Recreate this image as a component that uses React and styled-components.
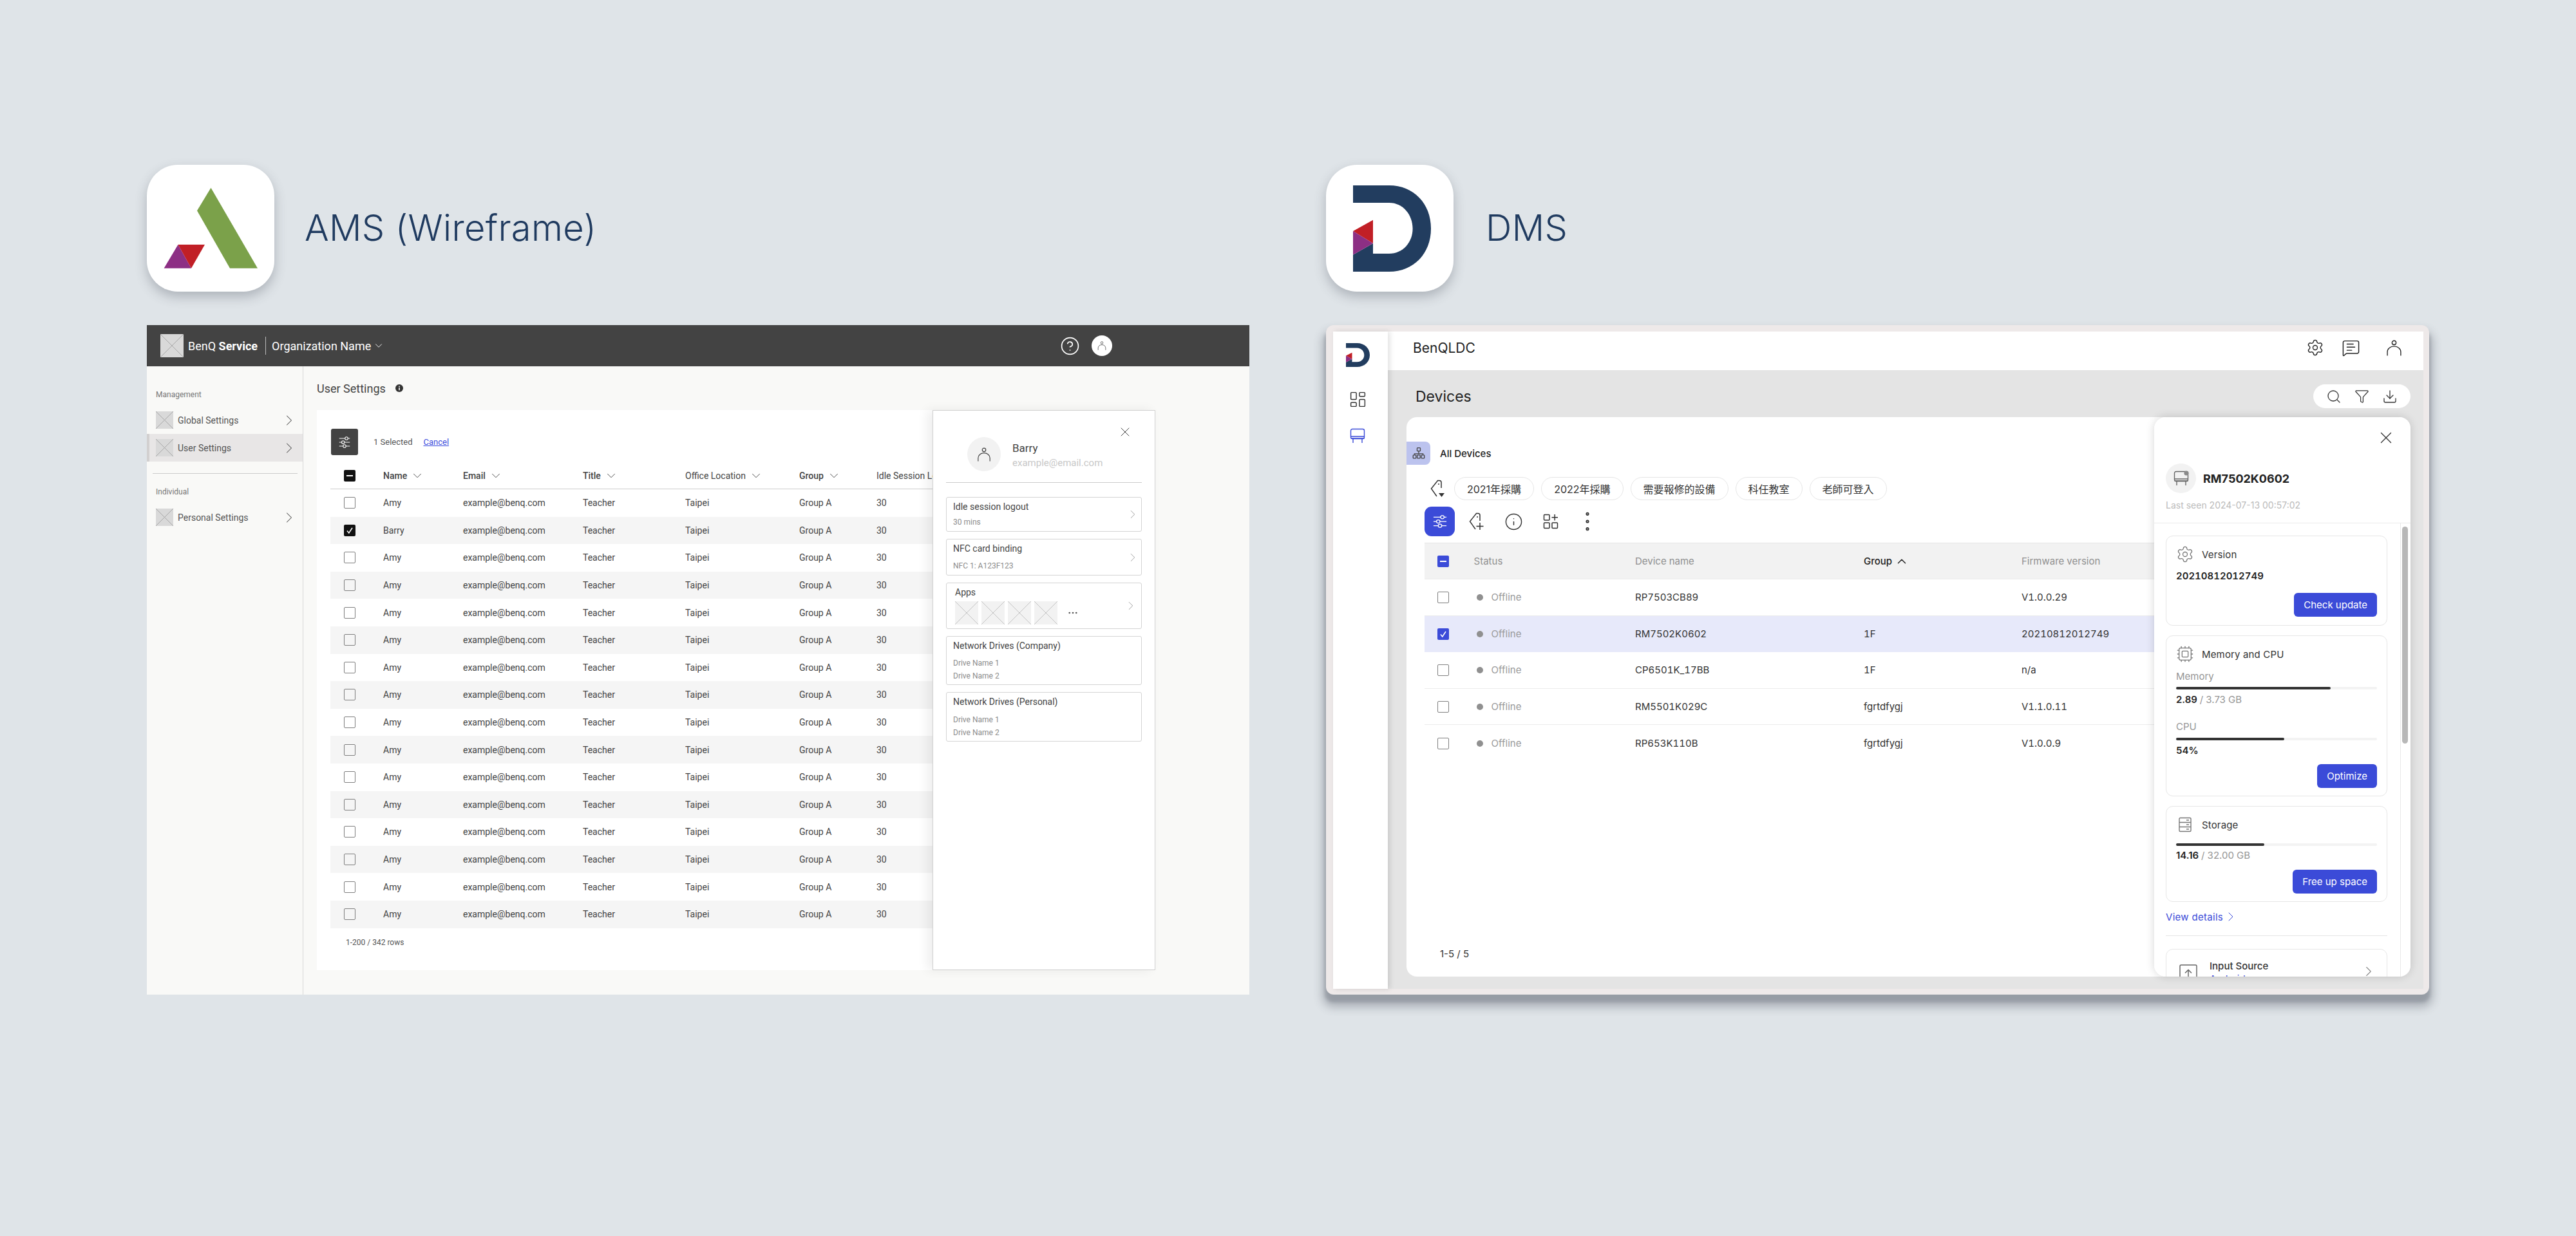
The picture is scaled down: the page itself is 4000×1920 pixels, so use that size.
import React from 'react';
import styled, { createGlobalStyle } from 'styled-components';
import {
  ChevronDown, ChevronRight, ChevronUp, CircleHelp, Cpu, Download, Ellipsis, EllipsisVertical,
  Funnel, Info, LayoutDashboard, MessageSquareText, Search, Settings, X,
} from 'lucide-react';

const GlobalStyle = createGlobalStyle`
  html, body {
    margin: 0;
    width: 4000px;
    height: 1920px;
    overflow: hidden;
    background: #dfe4e8;
  }
  * { box-sizing: border-box; }
`;

const Page = styled.div`
  display: flex;
  gap: 119px;
  width: 4000px;
  height: 1920px;
  padding: 256px 0 0 228px;
  background: #dfe4e8;
`;

const Column = styled.section`
  width: 1712px;
  display: flex;
  flex-direction: column;
  gap: 52px;
`;

const ProductHead = styled.div`
  display: flex;
  align-items: center;
  gap: ${(p) => p.$gap}px;
  height: 197px;
`;

const AppTile = styled.div`
  width: 198px;
  height: 197px;
  border-radius: 48px;
  background: #fff;
  box-shadow: 0 8px 18px rgba(60, 66, 80, 0.3);
  svg { display: block; }
`;

const ProductName = styled.h1`
  margin: 0 0 2px;
  font: 300 56px/68px Inter, sans-serif;
  letter-spacing: 0.35px;
  color: #1f3a5f;
`;

/* ---------- AMS wireframe ---------- */

const Wire = styled.div`
  height: 1040px;
  display: flex;
  flex-direction: column;
  font-family: Roboto, sans-serif;
  background: #f9f9f7;
`;

const WireHeader = styled.header`
  height: 64px;
  display: flex;
  align-items: center;
  padding: 0 213px 0 21px;
  background: #434343;
  color: #fff;
`;

const Placeholder = styled.div`
  flex: none;
  width: ${(p) => p.$w}px;
  height: ${(p) => p.$h || p.$w}px;
  background:
    linear-gradient(to top right, transparent calc(50% - 0.6px), ${(p) => p.$line || '#a8a8a8'}, transparent calc(50% + 0.6px)),
    linear-gradient(to bottom right, transparent calc(50% - 0.6px), ${(p) => p.$line || '#a8a8a8'}, transparent calc(50% + 0.6px)),
    ${(p) => p.$bg || '#d9d9d9'};
`;

const Brand = styled.div`
  margin-left: 7px;
  font-size: 18px;
  b { font-weight: 700; }
`;

const HeadDivider = styled.div`
  width: 1px;
  height: 28px;
  margin: 0 9px 0 12px;
  background: #bbb;
`;

const OrgName = styled.div`
  display: flex;
  align-items: center;
  gap: 3px;
  font-size: 18px;
`;

const WireHeadRight = styled.div`
  margin-left: auto;
  display: flex;
  align-items: center;
  gap: 18px;
`;

const HeadAvatar = styled.div`
  width: 32px;
  height: 32px;
  border-radius: 50%;
  background: #fff;
  display: flex;
  align-items: center;
  justify-content: center;
  color: #444;
`;

const WireBody = styled.div`
  flex: 1;
  display: flex;
  min-height: 0;
`;

const WireSide = styled.aside`
  width: 243px;
  padding-top: 36px;
  border-right: 1px solid #d8d8d8;
`;

const SideLabel = styled.div`
  padding-left: 14px;
  font-size: 12px;
  line-height: 16px;
  color: #777;
`;

const SideItem = styled.div`
  height: 43px;
  display: flex;
  align-items: center;
  gap: 7px;
  padding: 0 7px 0 ${(p) => (p.$active ? 10 : 14)}px;
  margin-top: ${(p) => p.$top || 0}px;
  border-left: ${(p) => (p.$active ? '4px solid #d2d0d0' : 'none')};
  background: ${(p) => (p.$active ? '#e8e6e6' : 'transparent')};
  font-size: 14px;
  color: #555;
  span { flex: 1; }
`;

const SideRule = styled.div`
  height: 1px;
  margin: 18px 8px 20px 9px;
  background: #ccc;
`;

const WireMain = styled.main`
  flex: 1;
  padding: 0 146px 38px 21px;
  display: flex;
  flex-direction: column;
`;

const WireTitle = styled.div`
  height: 68px;
  display: flex;
  align-items: center;
  gap: 15px;
  font-size: 18px;
  color: #444;
`;

const WireCard = styled.div`
  position: relative;
  flex: 1;
  padding-top: 29px;
  display: flex;
  flex-direction: column;
  background: #fff;
`;

const SelectBar = styled.div`
  display: flex;
  align-items: center;
  padding-left: 22px;
  font-size: 13px;
  color: #555;
`;

const FilterBtn = styled.div`
  width: 42px;
  height: 41px;
  margin-right: 24px;
  border-radius: 3px;
  display: flex;
  align-items: center;
  justify-content: center;
  background: #434343;
  color: #fff;
`;

const CancelLink = styled.a`
  margin-left: 17px;
  color: #3a4bdc;
  text-decoration: underline;
`;

const WireTable = styled.div`
  margin: 11px 30px 0 21px;
  font-size: 14px;
  color: #444;
`;

const WireRow = styled.div`
  display: grid;
  grid-template-columns: 82px 124px 186px 159px 177px 120px 1fr;
  align-items: center;
  height: ${(p) => (p.$head ? '42px' : '42.6px')};
  background: ${(p) => (p.$alt ? '#f5f5f5' : 'transparent')};
  border-bottom: ${(p) => (p.$head ? '1.5px solid #ccc' : 'none')};
`;

const CheckCell = styled.div`
  padding-left: 21px;
`;

const WireHeadCell = styled.div`
  display: flex;
  align-items: center;
  gap: 5px;
  white-space: nowrap;
  font-weight: ${(p) => (p.$strong ? 500 : 400)};
`;

const Box = styled.div`
  width: ${(p) => p.$w || 18}px;
  height: ${(p) => p.$h || 18}px;
  border-radius: 2px;
  border: ${(p) => (p.$on ? 'none' : '1.5px solid #808080')};
  background: ${(p) => (p.$on ? p.$on : 'transparent')};
  display: flex;
  align-items: center;
  justify-content: center;
  color: #fff;
`;

const Dash = styled.i`
  width: 10px;
  height: 2px;
  background: #fff;
`;

const WireFoot = styled.div`
  margin-top: auto;
  padding: 0 0 35px 45px;
  font-size: 12px;
  line-height: 16px;
  color: #555;
`;

const WireDrawer = styled.div`
  position: absolute;
  top: 0;
  right: 0;
  bottom: 0;
  width: 346px;
  padding: 0 20px;
  background: #fff;
  border: 1px solid #d0d0d0;
  box-shadow: -8px 0 16px rgba(0, 0, 0, 0.07);
  display: flex;
  flex-direction: column;
`;

const WireClose = styled.div`
  position: absolute;
  top: 21px;
  right: 34px;
  color: #444;
  display: flex;
`;

const WireProfile = styled.div`
  display: flex;
  align-items: center;
  gap: 18px;
  padding: 41px 0 17px 33px;
  margin-bottom: 22px;
  border-bottom: 1px solid #ccc;
`;

const WireAvatar = styled.div`
  width: 52px;
  height: 53px;
  border-radius: 50%;
  background: #f2f2f2;
  display: flex;
  align-items: center;
  justify-content: center;
  color: #444;
`;

const ProfileName = styled.div`
  font-size: 17px;
  line-height: 22px;
  margin-top: 2px;
  color: #444;
`;

const ProfileMail = styled.div`
  margin-top: 3px;
  font-size: 15px;
  line-height: 18px;
  color: #c8c8c8;
`;

const InfoCard = styled.div`
  position: relative;
  height: ${(p) => p.$h}px;
  margin-bottom: 11px;
  padding: 5px 10px 0;
  border: 1px solid #d4d4d4;
  border-radius: 3px;
`;

const InfoTitle = styled.div`
  font-size: 14px;
  line-height: 18px;
  color: #444;
  padding-left: ${(p) => p.$indent || 0}px;
  margin-bottom: ${(p) => p.$gap || 0}px;
`;

const InfoSub = styled.div`
  font-size: 12px;
  line-height: 20px;
  color: #8c8c8c;
`;

const InfoChevron = styled.div`
  position: absolute;
  top: 50%;
  right: ${(p) => p.$right || 2}px;
  transform: translateY(-50%);
  color: #999;
  display: flex;
`;

const AppThumbs = styled.div`
  display: flex;
  align-items: center;
  gap: 5px;
  padding: 5px 0 0 3px;
  color: #555;
  svg { margin-left: 10px; }
`;

/* ---------- DMS ---------- */

const Frame = styled.div`
  height: 1040px;
  width: 1713px;
  padding: 10px 9px 9px 11px;
  border-radius: 12px;
  background: #eee9e9;
  box-shadow: 0 14px 14px 6px rgba(60, 65, 80, 0.3), 0 10px 4px 2px rgba(60, 65, 80, 0.2);
  font-family: Inter, "Noto Sans CJK TC", sans-serif;
`;

const Screen = styled.div`
  height: 100%;
  display: flex;
`;

const DmsSide = styled.aside`
  position: relative;
  z-index: 1;
  width: 85px;
  padding: 18px 9px 0 0;
  display: flex;
  flex-direction: column;
  align-items: center;
  background: #fff;
  box-shadow: 3px 0 8px rgba(0, 0, 0, 0.12);
  color: #333;
`;

const NavIcon = styled.div`
  margin-top: ${(p) => p.$top}px;
  display: flex;
  color: ${(p) => p.$color || '#333'};
`;

const DmsMain = styled.div`
  flex: 1;
  display: flex;
  flex-direction: column;
  background: #e4e4e4;
`;

const DmsHeader = styled.header`
  height: 60px;
  flex: none;
  display: flex;
  align-items: center;
  padding: 0 33px 10px 39px;
  background: #fff;
  color: #222;
  font-size: 21px;
`;

const HeaderIcons = styled.div`
  margin-left: auto;
  display: flex;
  align-items: center;
  gap: 27px;
  svg:last-child { margin-left: 13px; }
`;

const DevicesBar = styled.div`
  height: 73px;
  flex: none;
  display: flex;
  align-items: center;
  justify-content: space-between;
  padding: 8px 20px 0 43px;
  font-size: 23px;
  color: #222;
`;

const ToolPill = styled.div`
  width: 151px;
  height: 37px;
  border-radius: 19px;
  background: #fff;
  display: flex;
  align-items: center;
  justify-content: center;
  gap: 20px;
  color: #333;
`;

const DmsCardWrap = styled.div`
  flex: 1;
  min-height: 0;
  padding: 0 20px 19px 29px;
`;

const DmsCard = styled.div`
  position: relative;
  height: 100%;
  padding-top: 38px;
  display: flex;
  flex-direction: column;
  border-radius: 16px;
  background: #fff;
`;

const AllDevices = styled.div`
  display: flex;
  align-items: center;
  gap: 15px;
  font-size: 15px;
  font-weight: 500;
  color: #222;
`;

const TreeTile = styled.div`
  width: 37px;
  height: 36px;
  border-radius: 0 8px 8px 0;
  background: #bcc3ee;
  display: flex;
  align-items: center;
  justify-content: center;
  color: #444;
`;

const TagRow = styled.div`
  display: flex;
  align-items: center;
  gap: 11px;
  margin-top: 19px;
  padding-left: 36px;
  color: #333;
`;

const Chip = styled.div`
  height: 36px;
  padding: 0 19px;
  display: flex;
  align-items: center;
  border: 1px solid #e6e6e6;
  border-radius: 18px;
  font-size: 16px;
  color: #333;
  white-space: nowrap;
`;

const ToolRow = styled.div`
  display: flex;
  align-items: center;
  height: 46px;
  margin-top: 10px;
  padding-left: 28px;
  color: #333;
`;

const BlueTool = styled.div`
  width: 47px;
  height: 46px;
  margin-right: 6px;
  border-radius: 11px;
  background: #3b4bd8;
  color: #fff;
  display: flex;
  align-items: center;
  justify-content: center;
`;

const ToolCell = styled.div`
  width: 57px;
  display: flex;
  justify-content: center;
`;

const DmsTable = styled.div`
  margin: 10px 28px 0;
  font-size: 15px;
  font-variant-numeric: tabular-nums;
  color: #333;
`;

const DmsRow = styled.div`
  display: grid;
  grid-template-columns: 76.6px 250.4px 355px 245px 1fr;
  align-items: center;
  height: ${(p) => (p.$head ? 57 : 56.6)}px;
  padding-left: 0;
  background: ${(p) => (p.$head ? '#f2f2f2' : p.$sel ? '#e7e9fa' : 'transparent')};
  border-top: ${(p) => (p.$head ? '1px solid #e6e6e6' : 'none')};
  border-bottom: ${(p) => (p.$plain ? 'none' : '1px solid #ececec')};
`;

const DmsCheck = styled.div`
  padding-left: 20px;
`;

const HeadText = styled.div`
  display: flex;
  align-items: center;
  gap: 4px;
  color: ${(p) => (p.$strong ? '#222' : '#909090')};
  font-weight: ${(p) => (p.$strong ? 500 : 400)};
`;

const Status = styled.div`
  display: flex;
  align-items: center;
  gap: 13px;
  padding-left: 4px;
  color: #9a9a9a;
  &::before {
    content: '';
    width: 10px;
    height: 10px;
    border-radius: 50%;
    background: #909090;
  }
`;

const DmsFoot = styled.div`
  margin-top: auto;
  padding: 0 0 26px 52px;
  font-size: 15px;
  line-height: 18px;
  color: #333;
`;

const DmsDrawer = styled.div`
  position: absolute;
  top: 0;
  right: 0;
  bottom: 0;
  width: 398px;
  border-radius: 18px;
  overflow: hidden;
  background: #fff;
  display: flex;
  flex-direction: column;
`;

const DrawerShadow = styled.div`
  position: absolute;
  top: 0;
  right: 0;
  bottom: 0;
  width: 398px;
  border-radius: 18px;
  box-shadow: 0 0 14px rgba(0, 0, 0, 0.16);
`;

const DmsClose = styled.div`
  position: absolute;
  top: 17px;
  right: 23px;
  color: #333;
  display: flex;
`;

const DrawerHead = styled.div`
  flex: none;
  height: 165px;
  padding: 72px 0 0 18px;
  border-bottom: 1px solid #ebebeb;
`;

const DeviceLine = styled.div`
  display: flex;
  align-items: center;
  gap: 11px;
  font-size: 18px;
  font-weight: 700;
  color: #222;
`;

const DeviceAvatar = styled.div`
  width: 47px;
  height: 46px;
  border-radius: 50%;
  background: #f2f2f2;
  display: flex;
  align-items: center;
  justify-content: center;
  color: #666;
`;

const LastSeen = styled.div`
  margin-top: 10px;
  font-size: 14px;
  line-height: 18px;
  color: #bbb;
`;

const DrawerScroll = styled.div`
  position: relative;
  flex: 1;
  min-height: 0;
  overflow: hidden;
`;

const DrawerInner = styled.div`
  width: 383px;
  height: 100%;
  padding: 19px 20px 0 18px;
  border-right: 1px solid #e8e8e8;
`;

const ScrollThumb = styled.div`
  position: absolute;
  top: 5px;
  right: 4px;
  width: 9px;
  height: 337px;
  border-radius: 5px;
  background: #b8b8b8;
`;

const StatCard = styled.div`
  height: ${(p) => p.$h}px;
  margin-bottom: 15px;
  padding: 16px 15px 0;
  border: 1px solid #e6e6e6;
  border-radius: 11px;
  display: flex;
  flex-direction: column;
`;

const StatTitle = styled.div`
  display: flex;
  align-items: center;
  gap: 12px;
  height: 24px;
  font-size: 15px;
  letter-spacing: 0.15px;
  color: #333;
  svg { color: #777; flex: none; }
`;

const StatLabel = styled.div`
  margin-top: ${(p) => p.$top}px;
  font-size: 15px;
  line-height: 18px;
  color: #969696;
`;

const StatValue = styled.div`
  margin-top: ${(p) => p.$top}px;
  font-size: 15px;
  line-height: ${(p) => p.$line || 18}px;
  font-weight: 600;
  color: #222;
  font-variant-numeric: ${(p) => (p.$tab ? 'tabular-nums' : 'normal')};
  span { font-weight: 400; color: #969696; }
`;

const Meter = styled.div`
  height: 4px;
  margin-top: ${(p) => p.$top}px;
  border-radius: 2px;
  background: #f3f3f3;
`;

const MeterFill = styled.div`
  height: 100%;
  width: ${(p) => p.$pct}%;
  border-radius: 2px;
  background: #333;
`;

const BlueButton = styled.div`
  align-self: flex-end;
  height: 37px;
  margin-top: ${(p) => p.$top}px;
  padding: 0 15px;
  display: flex;
  align-items: center;
  border-radius: 6px;
  background: #3b4bd8;
  color: #fff;
  font-size: 15px;
`;

const ViewDetails = styled.div`
  display: flex;
  align-items: center;
  height: 18px;
  margin-top: -1px;
  font-size: 15px;
  letter-spacing: 0.3px;
  color: #3b4bd8;
`;

const DrawerRule = styled.div`
  height: 1px;
  margin: 20px 0;
  background: #e4e4e4;
`;

const SourceCard = styled.div`
  position: relative;
  height: 90px;
  padding: 16px 0 0 67px;
  border: 1px solid #e6e6e6;
  border-radius: 11px;
  font-size: 15px;
  color: #333;
  svg.source { position: absolute; left: 20px; top: 23px; color: #666; }
  svg.go { position: absolute; right: 15px; top: 21px; color: #888; }
`;

const SourceName = styled.div`
  font-weight: 500;
  line-height: 20px;
`;

const SourceValue = styled.div`
  color: #3b4bd8;
  line-height: 20px;
`;

/* ---------- drawings ---------- */

const AmsLogo = () => (
  <svg width="198" height="197" viewBox="0 0 198 197">
    <polygon points="99.5,35.7 172,160.7 129,160.7 78,71.3" fill="#7ba14a" />
    <polygon points="48.5,124 26.6,160.7 69,160.7" fill="#8d2f84" />
    <polygon points="48.5,124 90,124 69,160.7" fill="#c11f26" />
  </svg>
);

const DmsLogo = ({ width, height }) => (
  <svg width={width} height={height} viewBox="42 32 121 134" preserveAspectRatio="none">
    <path
      d="M42 32H98C136 32 163 60 163 99C163 138 136 166 98 166H42V139.7L73 122V138H98C120 138 134.6 120 134.6 99C134.6 78 120 59 98 59H42Z"
      fill="#223d5f"
    />
    <polygon points="73,85.7 42,103 73,122" fill="#c11f26" />
    <polygon points="42,103 73,122 42,139.7" fill="#8d2f84" />
  </svg>
);

const Person = ({ size = 24 }) => (
  <svg width={size} height={size} viewBox="0 0 24 24" fill="none" stroke="currentColor" strokeWidth="1.3">
    <circle cx="12" cy="4.2" r="3" />
    <path d="M2 23.5V18a10 8.5 0 0 1 20 0V23.5" />
  </svg>
);

const DisplayIcon = ({ size = 24, color = 'currentColor', dot }) => (
  <svg width={size} height={size} viewBox="0 0 24 24" fill="none" stroke={color} strokeWidth="1.4">
    <rect x="1.5" y="1.5" width="21" height="15" rx="2.5" />
    <path d="M1.5 13H22.5M1.5 16H22.5M5 16.5V23M19 16.5V23" />
    {dot && <circle cx="20" cy="4" r="3.6" fill="#8a8a8a" stroke="none" />}
  </svg>
);

const SlidersIcon = ({ width, height }) => (
  <svg width={width} height={height} viewBox="0 0 24 24" fill="none" stroke="currentColor" strokeWidth="1.5" preserveAspectRatio="none">
    <path d="M1 4H13M19 4H23M1 12H6M12 12H23M1 20H9M15 20H23" />
    <circle cx="16" cy="4" r="3" />
    <circle cx="9" cy="12" r="3" />
    <circle cx="12" cy="20" r="3" />
  </svg>
);

const TreeIcon = () => (
  <svg width="20" height="20" viewBox="0 0 24 24" fill="none" stroke="currentColor" strokeWidth="1.6">
    <rect x="9" y="2" width="6" height="6" rx="1" />
    <path d="M12 8v5M4 15v-2h16v2" />
    <rect x="1.5" y="15.5" width="5.5" height="6" rx="1" />
    <rect x="9.2" y="15.5" width="5.5" height="6" rx="1" />
    <rect x="17" y="15.5" width="5.5" height="6" rx="1" />
  </svg>
);

const TagIcon = ({ mode }) => (
  <svg width="27" height="30" viewBox="0 0 27 30" fill="none" stroke="currentColor" strokeWidth="1.5">
    <path d="M15 2.5 L12.5 2.5 L2.5 15 L11 27 M15 2.5 A3 3 0 0 1 18 5.5 V14" />
    <circle cx="14" cy="8" r="1" fill="currentColor" stroke="none" />
    {mode === 'add' && <path d="M18 17V28M12.5 22.5H23.5" />}
    {mode === 'down' && <polygon points="14,22 23,22 18.5,28" fill="currentColor" stroke="none" />}
  </svg>
);

const GridPlus = () => (
  <svg width="24" height="24" viewBox="0 0 24 24" fill="none" stroke="currentColor" strokeWidth="1.5">
    <rect x="1.5" y="1.5" width="8.5" height="8.5" rx="1" />
    <rect x="1.5" y="14" width="8.5" height="8.5" rx="1" />
    <rect x="14" y="14" width="8.5" height="8.5" rx="1" />
    <path d="M18.2 1V10.5M13.5 5.8H23" />
  </svg>
);

const StorageIcon = () => (
  <svg width="28" height="24" viewBox="0 0 28 24" fill="none" stroke="currentColor" strokeWidth="1.4">
    <rect x="5" y="1.5" width="18" height="21" rx="1.5" />
    <path d="M5 8.5H23M5 15.5H23M16 5H20M16 12H20M16 19H20" />
  </svg>
);

const SourceIcon = () => (
  <svg className="source" width="28" height="28" viewBox="0 0 28 28" fill="none" stroke="currentColor" strokeWidth="1.5">
    <rect x="1" y="1" width="26" height="26" rx="2" />
    <path d="M14 21V9M9 13.5L14 8.5L19 13.5" />
  </svg>
);

const InfoDot = () => (
  <svg width="12" height="12" viewBox="0 0 12 12">
    <circle cx="6" cy="6" r="6" fill="#333" />
    <rect x="5.2" y="5" width="1.6" height="4.2" fill="#fff" />
    <rect x="5.2" y="2.6" width="1.6" height="1.5" fill="#fff" />
  </svg>
);

const CheckMark = ({ size = 14 }) => (
  <svg width={size} height={size} viewBox="0 0 14 14" fill="none" stroke="currentColor" strokeWidth="1.6">
    <path d="M3 7.5L5.8 11L11 3" />
  </svg>
);

/* ---------- data ---------- */

const wireRows = Array.from({ length: 16 }, (_, i) => ({ name: i === 1 ? 'Barry' : 'Amy', on: i === 1 }));

const wireHeads = [
  ['Name', true, true],
  ['Email', true, true],
  ['Title', true, true],
  ['Office Location', false, true],
  ['Group', true, true],
  ['Idle Session Logout', false, false],
];

const chips = ['2021年採購', '2022年採購', '需要報修的設備', '科任教室', '老師可登入'];

const devices = [
  { name: 'RP7503CB89', group: '', fw: 'V1.0.0.29' },
  { name: 'RM7502K0602', group: '1F', fw: '20210812012749', sel: true },
  { name: 'CP6501K_17BB', group: '1F', fw: 'n/a' },
  { name: 'RM5501K029C', group: 'fgrtdfygj', fw: 'V1.1.0.11' },
  { name: 'RP653K110B', group: 'fgrtdfygj', fw: 'V1.0.0.9', plain: true },
];

const Ams = () => (
  <Wire>
    <WireHeader>
      <Placeholder $w={36} />
      <Brand>BenQ <b>Service</b></Brand>
      <HeadDivider />
      <OrgName>Organization Name <ChevronDown size={18} strokeWidth={1.2} /></OrgName>
      <WireHeadRight>
        <CircleHelp size={31} strokeWidth={1.3} />
        <HeadAvatar><Person size={14} /></HeadAvatar>
      </WireHeadRight>
    </WireHeader>
    <WireBody>
      <WireSide>
        <SideLabel>Management</SideLabel>
        <SideItem $top={10}>
          <Placeholder $w={27} />
          <span>Global Settings</span>
          <ChevronRight size={28} strokeWidth={0.9} />
        </SideItem>
        <SideItem $active>
          <Placeholder $w={27} />
          <span>User Settings</span>
          <ChevronRight size={28} strokeWidth={0.9} />
        </SideItem>
        <SideRule />
        <SideLabel>Individual</SideLabel>
        <SideItem $top={10}>
          <Placeholder $w={27} />
          <span>Personal Settings</span>
          <ChevronRight size={28} strokeWidth={0.9} />
        </SideItem>
      </WireSide>
      <WireMain>
        <WireTitle>User Settings <InfoDot /></WireTitle>
        <WireCard>
          <SelectBar>
            <FilterBtn><SlidersIcon width={18} height={18} /></FilterBtn>
            1 Selected
            <CancelLink>Cancel</CancelLink>
          </SelectBar>
          <WireTable>
            <WireRow $head>
              <CheckCell><Box $on="#111"><Dash /></Box></CheckCell>
              {wireHeads.map(([label, strong, sort]) => (
                <WireHeadCell key={label} $strong={strong}>
                  {label}
                  {sort && <ChevronDown size={22} strokeWidth={1} />}
                </WireHeadCell>
              ))}
            </WireRow>
            {wireRows.map((row, i) => (
              <WireRow key={i} $alt={i % 2 === 1}>
                <CheckCell>
                  {row.on ? <Box $on="#111"><CheckMark /></Box> : <Box />}
                </CheckCell>
                <div>{row.name}</div>
                <div>example@benq.com</div>
                <div>Teacher</div>
                <div>Taipei</div>
                <div>Group A</div>
                <div>30</div>
              </WireRow>
            ))}
          </WireTable>
          <WireFoot>1-200 / 342 rows</WireFoot>
          <WireDrawer>
            <WireClose><X size={24} strokeWidth={1} /></WireClose>
            <WireProfile>
              <WireAvatar><Person size={22} /></WireAvatar>
              <div>
                <ProfileName>Barry</ProfileName>
                <ProfileMail>example@email.com</ProfileMail>
              </div>
            </WireProfile>
            <InfoCard $h={54}>
              <InfoTitle $gap={5}>Idle session logout</InfoTitle>
              <InfoSub>30 mins</InfoSub>
              <InfoChevron><ChevronRight size={22} strokeWidth={1} /></InfoChevron>
            </InfoCard>
            <InfoCard $h={57}>
              <InfoTitle $gap={8}>NFC card binding</InfoTitle>
              <InfoSub>NFC 1: A123F123</InfoSub>
              <InfoChevron><ChevronRight size={22} strokeWidth={1} /></InfoChevron>
            </InfoCard>
            <InfoCard $h={72}>
              <InfoTitle $indent={3}>Apps</InfoTitle>
              <AppThumbs>
                {[0, 1, 2, 3].map((n) => <Placeholder key={n} $w={36} $bg="#f2f2f2" $line="#c4c4c4" />)}
                <Ellipsis size={18} strokeWidth={1.6} />
              </AppThumbs>
              <InfoChevron $right={5}><ChevronRight size={22} strokeWidth={1} /></InfoChevron>
            </InfoCard>
            <InfoCard $h={76}>
              <InfoTitle $gap={8}>Network Drives (Company)</InfoTitle>
              <InfoSub>Drive Name 1</InfoSub>
              <InfoSub>Drive Name 2</InfoSub>
            </InfoCard>
            <InfoCard $h={77}>
              <InfoTitle $gap={9}>Network Drives (Personal)</InfoTitle>
              <InfoSub>Drive Name 1</InfoSub>
              <InfoSub>Drive Name 2</InfoSub>
            </InfoCard>
          </WireDrawer>
        </WireCard>
      </WireMain>
    </WireBody>
  </Wire>
);

const Dms = () => (
  <Frame>
    <Screen>
      <DmsSide>
        <DmsLogo width={37} height={37} />
        <NavIcon $top={36}><LayoutDashboard size={29} strokeWidth={1.2} /></NavIcon>
        <NavIcon $top={30} $color="#3b4bd8"><DisplayIcon /></NavIcon>
      </DmsSide>
      <DmsMain>
        <DmsHeader>
          BenQLDC
          <HeaderIcons>
            <Settings size={28} strokeWidth={1.2} />
            <MessageSquareText size={29} strokeWidth={1.2} />
            <Person size={25} />
          </HeaderIcons>
        </DmsHeader>
        <DevicesBar>
          Devices
          <ToolPill>
            <Search size={24} strokeWidth={1.3} />
            <Funnel size={23} strokeWidth={1.3} />
            <Download size={24} strokeWidth={1.3} />
          </ToolPill>
        </DevicesBar>
        <DmsCardWrap>
          <DmsCard>
            <AllDevices>
              <TreeTile><TreeIcon /></TreeTile>
              All Devices
            </AllDevices>
            <TagRow>
              <TagIcon mode="down" />
              {chips.map((c) => <Chip key={c}>{c}</Chip>)}
            </TagRow>
            <ToolRow>
              <BlueTool><SlidersIcon width={22} height={20} /></BlueTool>
              <ToolCell><TagIcon mode="add" /></ToolCell>
              <ToolCell><Info size={29} strokeWidth={1.2} /></ToolCell>
              <ToolCell><GridPlus /></ToolCell>
              <ToolCell><EllipsisVertical size={40} strokeWidth={1.1} /></ToolCell>
            </ToolRow>
            <DmsTable>
              <DmsRow $head>
                <DmsCheck><Box $on="#3b4bd8"><Dash /></Box></DmsCheck>
                <HeadText>Status</HeadText>
                <HeadText>Device name</HeadText>
                <HeadText $strong>Group <ChevronUp size={22} strokeWidth={1.6} /></HeadText>
                <HeadText>Firmware version</HeadText>
              </DmsRow>
              {devices.map((d) => (
                <DmsRow key={d.name} $sel={d.sel} $plain={d.plain || d.sel}>
                  <DmsCheck>
                    {d.sel ? <Box $on="#3b4bd8"><CheckMark /></Box> : <Box />}
                  </DmsCheck>
                  <Status>Offline</Status>
                  <div>{d.name}</div>
                  <div>{d.group}</div>
                  <div>{d.fw}</div>
                </DmsRow>
              ))}
            </DmsTable>
            <DmsFoot>1-5 / 5</DmsFoot>
            <DrawerShadow />
            <DmsDrawer>
              <DmsClose><X size={30} strokeWidth={1.1} /></DmsClose>
              <DrawerHead>
                <DeviceLine>
                  <DeviceAvatar><DisplayIcon dot /></DeviceAvatar>
                  RM7502K0602
                </DeviceLine>
                <LastSeen>Last seen 2024-07-13 00:57:02</LastSeen>
              </DrawerHead>
              <DrawerScroll>
                <DrawerInner>
                  <StatCard $h={140}>
                    <StatTitle><Settings size={28} strokeWidth={1.1} />Version</StatTitle>
                    <StatValue $top={12} $line={20} $tab>20210812012749</StatValue>
                    <BlueButton $top={16}>Check update</BlueButton>
                  </StatCard>
                  <StatCard $h={250}>
                    <StatTitle><Cpu size={28} strokeWidth={1.1} />Memory and CPU</StatTitle>
                    <StatLabel $top={14}>Memory</StatLabel>
                    <Meter $top={7}><MeterFill $pct={77} /></Meter>
                    <StatValue $top={7}>2.89 <span>/ 3.73 GB</span></StatValue>
                    <StatLabel $top={24}>CPU</StatLabel>
                    <Meter $top={8}><MeterFill $pct={54} /></Meter>
                    <StatValue $top={7}>54%</StatValue>
                    <BlueButton $top={12}>Optimize</BlueButton>
                  </StatCard>
                  <StatCard $h={149}>
                    <StatTitle><StorageIcon />Storage</StatTitle>
                    <Meter $top={17}><MeterFill $pct={44} /></Meter>
                    <StatValue $top={6}>14.16 <span>/ 32.00 GB</span></StatValue>
                    <BlueButton $top={13}>Free up space</BlueButton>
                  </StatCard>
                  <ViewDetails>View details <ChevronRight size={24} strokeWidth={1} /></ViewDetails>
                  <DrawerRule />
                  <SourceCard>
                    <SourceIcon />
                    <SourceName>Input Source</SourceName>
                    <SourceValue>Android</SourceValue>
                    <ChevronRight className="go" size={26} strokeWidth={1} />
                  </SourceCard>
                </DrawerInner>
                <ScrollThumb />
              </DrawerScroll>
            </DmsDrawer>
          </DmsCard>
        </DmsCardWrap>
      </DmsMain>
    </Screen>
  </Frame>
);

const App = () => (
  <>
    <GlobalStyle />
    <Page>
      <Column>
        <ProductHead $gap={47}>
          <AppTile><AmsLogo /></AppTile>
          <ProductName>AMS (Wireframe)</ProductName>
        </ProductHead>
        <Ams />
      </Column>
      <Column>
        <ProductHead $gap={50}>
          <AppTile>
            <svg width="198" height="197" viewBox="0 0 198 197">
              <svg x="42" y="32" width="121" height="134"><DmsLogo width={121} height={134} /></svg>
            </svg>
          </AppTile>
          <ProductName>DMS</ProductName>
        </ProductHead>
        <Dms />
      </Column>
    </Page>
  </>
);

export default App;
